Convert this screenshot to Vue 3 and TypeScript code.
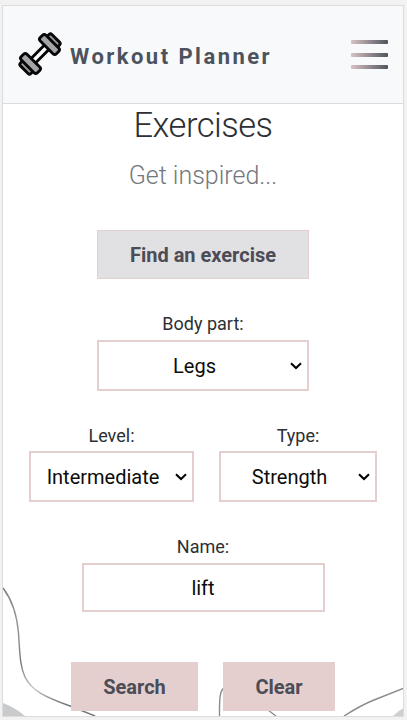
<script setup lang="ts">
import { ref } from 'vue'

const bodyPart = ref('Legs')
const level = ref('Intermediate')
const kind = ref('Strength')
const name = ref('lift')

const bodyParts: string[] = ['Legs', 'Arms', 'Back', 'Chest', 'Core']
const levels: string[] = ['Beginner', 'Intermediate', 'Expert']
const kinds: string[] = ['Strength', 'Cardio', 'Stretching']

function clear(): void {
  name.value = ''
}
</script>

<template>
  <div class="page">
    <div class="screen">
      <header class="header">
        <svg class="logo" viewBox="0 0 44 44" aria-hidden="true">
          <g transform="translate(22 22) rotate(-45)" stroke="#070707" stroke-width="2.9" stroke-linejoin="round">
            <rect x="-12" y="-3.1" width="24" height="6.2" fill="#fff" />
            <rect x="-22.2" y="-7.4" width="7.5" height="14.8" rx="2" fill="#9c9c9e" />
            <rect x="14.7" y="-7.4" width="7.5" height="14.8" rx="2" fill="#9c9c9e" />
            <rect x="-17.4" y="-11.4" width="8" height="22.8" rx="2.4" fill="#a5a5a7" />
            <rect x="9.4" y="-11.4" width="8" height="22.8" rx="2.4" fill="#a5a5a7" />
          </g>
        </svg>
        <span class="brand">Workout Planner</span>
        <button class="menu" type="button" aria-label="Menu"><i /><i /><i /></button>
      </header>
      <main class="content">
        <svg class="waves" viewBox="0 0 400 135" fill="none" stroke-width="1.4" aria-hidden="true">
          <defs>
            <linearGradient id="line" x1="0" y1="0" x2="0.25" y2="1">
              <stop offset="0" stop-color="#777a7d" />
              <stop offset="0.3" stop-color="#999" />
              <stop offset="0.6" stop-color="#74797d" />
              <stop offset="0.82" stop-color="#c2c4c5" />
              <stop offset="1" stop-color="#74777a" />
            </linearGradient>
          </defs>
          <path d="M0 7C10 20 14 34 15.500 52C17 75 17 85 22 96C29 110 42 116 67 125L92 135" stroke="url(#line)" />
          <path d="M0 122Q13 127 22 135H0Z" fill="#c9cbcc" />
          <path d="M216.500 135C216.500 121 216 109 222 106C235 103 254 121 273 135" stroke="#8b8e90" />
          <path d="M341 135C352 128 361 123 371 119L401 107" stroke="#8a8a8c" />
          <path d="M390 135Q396 129 401 127V135Z" fill="#cfcfd0" />
        </svg>
        <h1>Exercises</h1>
        <p class="lead">Get inspired...</p>
        <button class="find" type="button">Find an exercise</button>
        <label class="field body">
          <span>Body part:</span>
          <div class="select">
            <select v-model="bodyPart"><option v-for="b in bodyParts" :key="b">{{ b }}</option></select>
            <svg viewBox="0 0 12 8"><path d="M1 1.2L6 6L11 1.2" /></svg>
          </div>
        </label>
        <div class="pair">
          <label class="field level">
            <span>Level:</span>
            <div class="select">
              <select v-model="level"><option v-for="l in levels" :key="l">{{ l }}</option></select>
              <svg viewBox="0 0 12 8"><path d="M1 1.2L6 6L11 1.2" /></svg>
            </div>
          </label>
          <label class="field type">
            <span>Type:</span>
            <div class="select">
              <select v-model="kind"><option v-for="k in kinds" :key="k">{{ k }}</option></select>
              <svg viewBox="0 0 12 8"><path d="M1 1.2L6 6L11 1.2" /></svg>
            </div>
          </label>
        </div>
        <label class="field name">
          <span>Name:</span>
          <input v-model="name" type="text" />
        </label>
        <div class="actions">
          <button class="search" type="button">Search</button>
          <button class="clear" type="button" @click="clear">Clear</button>
        </div>
      </main>
    </div>
  </div>
</template>

<style>
body {
  background: #f2f2f2;
}
</style>

<style scoped>
.page,
.page * {
  box-sizing: border-box;
}
.page {
  height: 720px;
  padding: 5px 3px 3px 2px;
  background: #f2f2f2;
  font-family: Roboto, sans-serif;
  color: #2c2f33;
  overflow: hidden;
}
.screen {
  height: 712px;
  display: flex;
  flex-direction: column;
  border: 1px solid #dcdcde;
  background: #fff;
  overflow: hidden;
}
.header {
  flex: none;
  height: 98px;
  display: flex;
  align-items: center;
  padding: 0 15px;
  border-bottom: 1px solid #dcdcde;
  background: #f8f9fb;
}
.logo {
  width: 44px;
  height: 44px;
  margin-top: -2px;
}
.brand {
  margin: 5px 0 0 8px;
  font-size: 22px;
  line-height: 28px;
  font-weight: 700;
  letter-spacing: 2.46px;
  color: #4c535d;
  white-space: nowrap;
}
button,
select,
input {
  font-family: inherit;
  margin: 0;
}
.menu {
  margin-left: auto;
  width: 37px;
  padding: 0;
  display: flex;
  flex-direction: column;
  gap: 8.5px;
  border: 0;
  background: none;
}
.menu i {
  height: 4px;
  border-radius: 1px;
  background: linear-gradient(90deg, #d5c2c3, #50535d);
}
.content {
  position: relative;
  flex: 1;
  display: flex;
  flex-direction: column;
  align-items: center;
}
.waves {
  position: absolute;
  left: 0;
  bottom: 0;
  width: 400px;
  height: 135px;
}
h1 {
  margin: 0;
  font-size: 34.5px;
  line-height: 42px;
  font-weight: 300;
  letter-spacing: -0.5px;
}
.lead {
  margin: 15px 0 0;
  font-size: 25px;
  line-height: 30px;
  font-weight: 300;
  color: #73777c;
}
.find,
.search,
.clear {
  position: relative;
  height: 49px;
  padding: 0;
  border: 1px solid #e4cfce;
  background: #e4cfce;
  font-size: 20px;
  font-weight: 700;
  color: #4b4c56;
}
.find {
  width: 212px;
  margin-top: 39px;
  background: #e1e0e2;
}
.field {
  display: flex;
  flex-direction: column;
  gap: 3px;
  font-size: 18px;
  line-height: 27px;
  text-align: center;
}
.body {
  width: 212px;
  margin-top: 31px;
}
.select {
  position: relative;
  height: 51px;
}
.select select,
.name input {
  width: 100%;
  height: 100%;
  appearance: none;
  border: 2px solid #e4cfce;
  border-radius: 0;
  background: #fff;
  color: #0c0c0c;
  font-size: 20px;
  text-align: center;
  padding: 0 17px 0 0;
  outline: 0;
}
.select svg {
  position: absolute;
  right: 7px;
  top: 22px;
  width: 12px;
  height: 8px;
  fill: none;
  stroke: #000;
  stroke-width: 2;
}
.pair {
  display: flex;
  gap: 25px;
  margin-top: 31px;
}
.pair .field {
  gap: 2px;
}
.level {
  width: 165px;
}
.type {
  width: 158px;
}
.name {
  width: 243px;
  margin-top: 31px;
}
.name input {
  height: 49px;
  padding: 0;
}
.actions {
  display: flex;
  gap: 25px;
  margin-top: 50px;
}
.search {
  width: 127px;
}
.clear {
  width: 112px;
}
</style>
